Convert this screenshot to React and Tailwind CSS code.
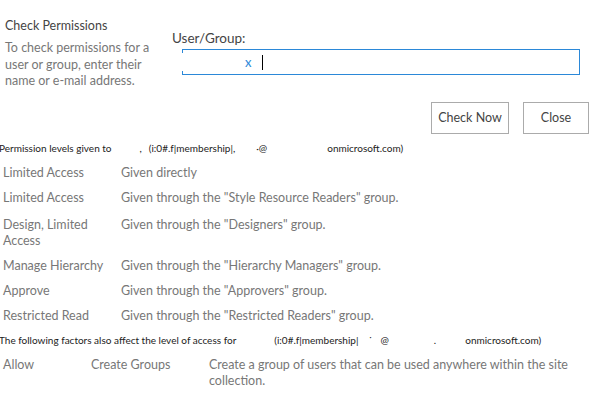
import React from "react";

const font = { fontFamily: 'Lato, "Open Sans", sans-serif' };

const rows = [
  ["Limited Access", "Given directly", ""],
  ["Limited Access", 'Given through the "Style Resource Readers" group.', ""],
  ["Design, Limited Access", 'Given through the "Designers" group.', "pt-[6.5px]"],
  ["Manage Hierarchy", 'Given through the "Hierarchy Managers" group.', ""],
  ["Approve", 'Given through the "Approvers" group.', ""],
  ["Restricted Read", 'Given through the "Restricted Readers" group.', ""],
];

export default function App() {
  return (
    <div className="w-[599px] h-[411px] bg-white overflow-hidden relative" style={font}>
      <div className="flex h-[102px]">
        <div className="w-[172px] pl-[5px] pt-[16px]">
          <div className="text-[12.5px] leading-[20px] text-[#444]">Check Permissions</div>
          <div className="mt-[4px] text-[12.5px] leading-[16.5px] text-[#777] w-[150px]">
            To check permissions for a user or group, enter their name or e-mail address.
          </div>
        </div>
        <div className="flex-1 pt-[28px]">
          <div className="text-[13.5px] leading-[20px] text-[#444]">User/Group:</div>
          <div className="ml-[10px] mt-[1px] w-[398px] h-[26px] border border-[#2b88d8] relative flex items-center">
            <span className="absolute left-[-1px] top-[3px] bottom-[3px] w-[1px] bg-white"></span>
            <span className="ml-[62px] text-[13px] text-[#2b88d8] leading-none">x</span>
            <span className="ml-[11px] w-[1px] h-[15px] bg-black"></span>
          </div>
        </div>
      </div>
      <div className="flex justify-end gap-[14px] pr-[10px]">
        <button className="w-[78px] h-[32px] border border-[#ababab] text-[12.5px] text-[#444] bg-white">Check Now</button>
        <button className="w-[66px] h-[32px] border border-[#ababab] text-[12.5px] text-[#444] bg-white">Close</button>
      </div>
      <div className="mt-[7px] flex text-[10px] leading-[14px] text-[#222] whitespace-nowrap ml-[-1px]">
        <span>Permission levels given to</span>
        <span className="ml-[28px]">,</span>
        <span className="ml-[7px]">(i:0#.f|membership|,</span>
        <span className="ml-[21px]">·@</span>
        <span className="ml-[60px]">onmicrosoft.com)</span>
      </div>
      <div className="mt-[5px] text-[12.5px] text-[#777]">
        {rows.map(([a, b, extra], i) => (
          <div key={i} className={"flex leading-[16px] py-[4.5px] " + extra}>
            <div className="w-[121px] pl-[3px] pr-[8px]">{a}</div>
            <div>{b}</div>
          </div>
        ))}
      </div>
      <div className="mt-[5px] flex text-[10px] leading-[14px] text-[#222] whitespace-nowrap ml-[-1px]">
        <span>The following factors also affect the level of access for</span>
        <span className="ml-[38px]">(i:0#.f|membership|</span>
        <span className="ml-[10px]">˙</span>
        <span className="ml-[8px]">@</span>
        <span className="ml-[45px]">.</span>
        <span className="ml-[29px]">onmicrosoft.com)</span>
      </div>
      <div className="mt-[10px] flex text-[12.5px] leading-[16px] text-[#777]">
        <div className="w-[91px] pl-[3px]">Allow</div>
        <div className="w-[118px]">Create Groups</div>
        <div className="w-[380px]">Create a group of users that can be used anywhere within the site collection.</div>
      </div>
    </div>
  );
}
